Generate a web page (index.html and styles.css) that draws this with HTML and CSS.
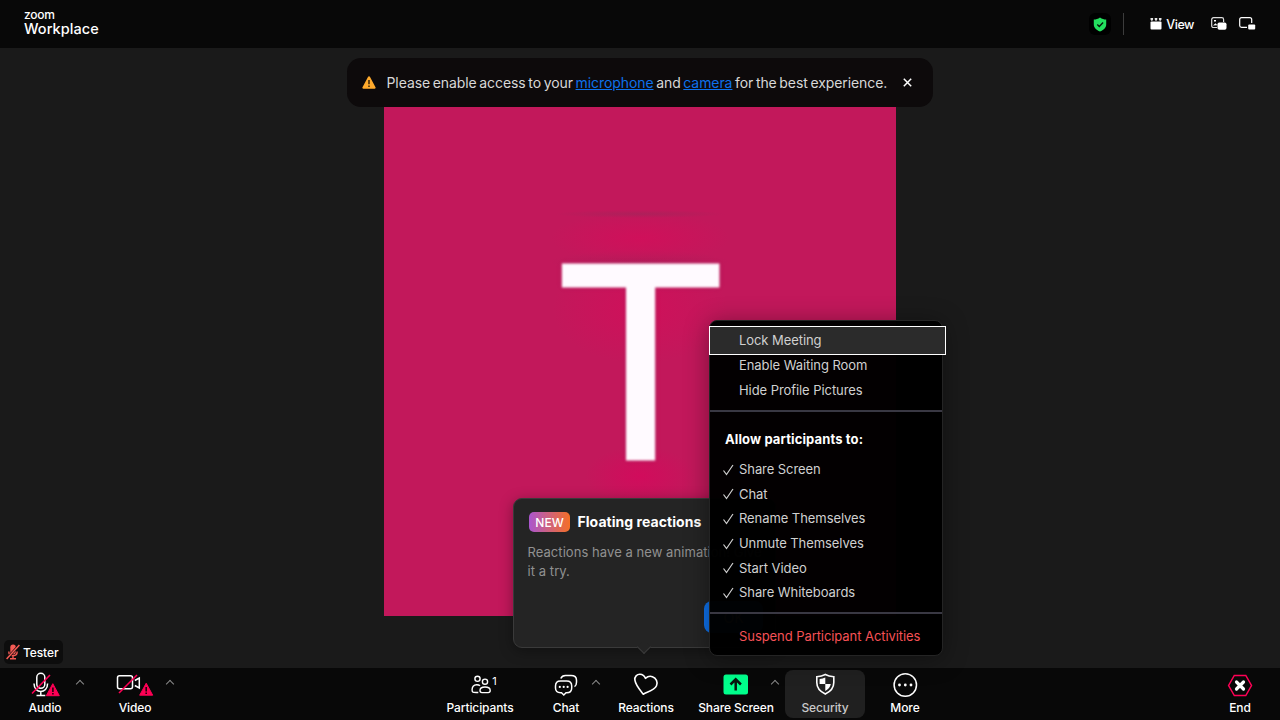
FILE: index.html
```html
<!DOCTYPE html>
<html lang="en">
<head>
<meta charset="utf-8">
<title>Zoom Workplace</title>
<link rel="stylesheet" href="styles.css">
</head>
<body>
<div class="app">
  <header class="topbar">
    <div class="brand"><span class="brand-top">zoom</span><span class="brand-name">Workplace</span></div>
    <div class="top-tools">
      <span class="shield-box"><svg width="14" height="15" viewBox="0 0 14 15"><path d="M7 0.5c2 1.4 4 2 6.2 2v5c0 3.3-2.700 5.500-6.200 7C3.500 13 .8 10.800.8 7.500v-5c2.200 0 4.200-.6 6.200-2z" fill="#23e05f"/><path d="M4.300 7.500l2 2 3.800-4" fill="none" stroke="#06150a" stroke-width="1.300"/></svg></span>
      <span class="divider"></span>
      <button class="view"><svg width="12" height="12" viewBox="0 0 12 12" fill="#fff"><path d="M.5 0h2.600v1.600l-.8 1.200H1.300L.5 1.600zM4.700 0h2.600v1.600l-.8 1.200h-1l-.8-1.200zM8.900 0h2.600v1.600l-.8 1.200h-1l-.8-1.200z" opacity=".9"/><rect x=".5" y="3.600" width="11" height="8" rx="1"/></svg><span>View</span></button>
      <svg class="pip" width="16" height="14" viewBox="0 0 16 14"><path d="M6 10.500H2.500a1.800 1.800 0 0 1-1.800-1.800V2.500A1.800 1.800 0 0 1 2.500.7h8.300a1.800 1.800 0 0 1 1.800 1.800V5" fill="none" stroke="#ddd" stroke-width="1.200"/><path d="M3 3h2v1.600H3zM2 8.500l2.500-2.300 2 2" fill="#fff"/><rect x="6.500" y="5.500" width="9" height="7.300" rx="1.800" fill="#fff"/></svg>
      <svg class="pip2" width="17" height="14" viewBox="0 0 17 14"><path d="M8 10.400H2.600A1.900 1.900 0 0 1 .7 8.500v-6A1.900 1.900 0 0 1 2.600.6h8.200a1.900 1.900 0 0 1 1.900 1.900V6" fill="none" stroke="#fff" stroke-width="1.200"/><rect x="9.200" y="7.500" width="7" height="5" rx="1" fill="#fff"/></svg>
    </div>
  </header>

  <main class="stage">
    <div class="avatar"><span class="initial">T</span></div>
    <div class="banner">
      <svg class="warn" width="14" height="13" viewBox="0 0 14 13"><path d="M6.100.8a1 1 0 0 1 1.800 0l5.600 10.500a1 1 0 0 1-.9 1.500H1.400a1 1 0 0 1-.9-1.500z" fill="#ffaa2c"/><path d="M7 4v4.200M7 9.500v1.500" stroke="#2a1a05" stroke-width="1.400"/></svg>
      <p class="banner-text"><span>Please enable access to your</span> <a>microphone</a> <span>and</span> <a>camera</a> <span>for the best experience.</span></p>
      <svg class="close" width="9" height="9" viewBox="0 0 9 9"><path d="M.8.8l7.400 7.400M8.200.8L.8 8.200" stroke="#fff" stroke-width="1.500"/></svg>
    </div>
    <div class="nametag">
      <svg width="15" height="16" viewBox="0 0 15 16"><rect x="4.300" y=".5" width="5.500" height="10" rx="2.750" fill="#f55b55"/><path d="M2.800 7.500c0 5.600 8.400 5.600 8.400 0M7 11.500v3.200M4 14.800h6" fill="none" stroke="#f55b55" stroke-width="1.400"/><path d="M.6 15L13.400 1" stroke="#0d0d0d" stroke-width="2.600"/><path d="M.6 15L13.400 1" stroke="#f55b55" stroke-width="1.500"/></svg>
      <span>Tester</span>
    </div>
    <section class="popover">
      <div class="pop-head"><span class="new">NEW</span><h2>Floating reactions</h2></div>
      <p>Reactions have a new animation! Give it a try.</p>
      <button class="ok">OK</button>
    </section>
  </main>

  <footer class="toolbar">
    <div class="tool audio">
      <svg class="ic" width="30" height="26" viewBox="0 0 30 26"><g fill="none" stroke="#fff" stroke-width="1.500"><rect x="6.800" y="1.300" width="8" height="15" rx="4"/><path d="M4 11.500c0 10.500 13.600 10.500 13.600 0M10.800 19.500v4M6.500 23.600h8.800"/></g><path d="M2 21.500L20 3" stroke="#ff0055" stroke-width="1.600"/><path d="M22.800 11.700l6.500 12H16.300z" fill="#ff0055" stroke="#ff0055"/><path d="M22.900 15.500v4.500M22.900 21.100v1.500" stroke="#24000c" stroke-width="1.600"/></svg>
      <span class="label">Audio</span><i class="caret"></i>
    </div>
    <div class="tool video">
      <svg class="ic" width="38" height="26" viewBox="0 0 38 26"><g fill="none" stroke="#fff" stroke-width="1.500"><rect x="1.500" y="3.800" width="15" height="13" rx="2"/><path d="M18.800 8.500l4.500-2.500v10L18.800 13.500"/></g><path d="M3 21L21 3" stroke="#ff0055" stroke-width="1.600"/><path d="M30.200 11.200l6.500 12H23.700z" fill="#ff0055" stroke="#ff0055"/><path d="M30.200 15v4.500M30.200 20.600v1.500" stroke="#24000c" stroke-width="1.600"/></svg>
      <span class="label">Video</span><i class="caret"></i>
    </div>
    <div class="tool participants">
      <span class="ic people"><svg width="20" height="26" viewBox="0 0 20 26" fill="none" stroke="#fff" stroke-width="1.400"><circle cx="6.500" cy="6.800" r="2.600"/><circle cx="14" cy="9.700" r="2.600"/><path d="M9 13.800c-1.500-1.500-5.200-1.600-6.800.4-1.400 2-1.500 5.200-.2 6 .7.500 3.500.3 5.300.3"/><path d="M14 15c-3 0-5 1.500-5 3.500 0 1.500.7 2.100 2 2.100h6.200c1.300 0 2-.6 2-2.100 0-2-2.200-3.500-5.200-3.500z"/></svg><b>1</b></span>
      <span class="label">Participants</span>
    </div>
    <div class="tool chat">
      <svg class="ic" width="24" height="26" viewBox="0 0 24 26"><path d="M6.800 6.500c.8-2 2.200-3 4.700-3H17c3.500 0 5.500 1.500 5.500 4.700v2c0 2.300-.5 3.600-2 4.500" fill="none" stroke="#fff" stroke-width="1.500"/><path d="M6.500 9h6.200c3.300 0 5 2 5 5v2c0 3-1.700 4.800-5 4.800H12L9.800 23l-2.300-2.200h-1c-3.300 0-5-1.800-5-4.800v-2c0-3 1.700-5 5-5z" fill="none" stroke="#fff" stroke-width="1.500"/><g fill="#fff"><circle cx="5.800" cy="14.900" r="1.100"/><circle cx="9.700" cy="14.900" r="1.100"/><circle cx="13.600" cy="14.900" r="1.100"/></g></svg>
      <span class="label">Chat</span><i class="caret"></i>
    </div>
    <div class="tool reactions">
      <svg class="ic" width="26" height="26" viewBox="0 0 26 26"><path d="M10.300 22.200C7 18 2.700 13.500 1.900 8.200 1.300 4.500 4 2.200 7 2.300c3 .1 4.500 1.800 5.400 4 2-1.700 4.500-2.500 7-1.600 3.800 1.300 5.700 5.300 4.100 9-1.800 4.300-8.500 6-13.200 8.500z" fill="none" stroke="#fff" stroke-width="1.600" stroke-linejoin="round"/></svg>
      <span class="label">Reactions</span>
    </div>
    <div class="tool share">
      <svg class="ic" width="26" height="26" viewBox="0 0 26 26"><rect x=".5" y="2.500" width="24.500" height="20" rx="2.500" fill="#00ff8c"/><path d="M12.700 18.500V7.500M7.500 12.500l5.200-5.200 5.200 5.200" fill="none" stroke="#07150e" stroke-width="2.500"/></svg>
      <span class="label">Share Screen</span><i class="caret"></i>
    </div>
    <div class="tool security active">
      <svg class="ic" width="22" height="26" viewBox="0 0 22 26"><path d="M11.300 2.500c2.600 1.400 5.300 2 8.500 2.200v5.800c0 5.500-3.200 9-8.500 11.500-5.300-2.500-8.500-6-8.500-11.500V4.700c3.200-.2 5.900-.8 8.500-2.200z" fill="none" stroke="#fff" stroke-width="1.600"/><path d="M11.300 5.500V12h5.500c-.5 3-2.400 5.200-5.500 7v-7H5.600V7c2.200-.2 4-.7 5.700-1.500z" fill="#fff"/></svg>
      <span class="label">Security</span>
    </div>
    <div class="tool more">
      <svg class="ic" width="26" height="26" viewBox="0 0 26 26"><circle cx="13.300" cy="13" r="11.200" fill="none" stroke="#fff" stroke-width="1.500"/><g fill="#fff"><circle cx="7.500" cy="13" r="1.400"/><circle cx="13.300" cy="13" r="1.400"/><circle cx="19" cy="13" r="1.400"/></g></svg>
      <span class="label">More</span>
    </div>
    <div class="tool end">
      <svg class="ic" width="26" height="26" viewBox="0 0 26 26"><path d="M7.300 3.500h11.500l5.700 10-5.700 10H7.300l-5.700-10z" fill="none" stroke="#ff0055" stroke-width="1.500"/><path d="M9.500 10l7 7M16.500 10l-7 7" stroke="#fff" stroke-width="3.200" stroke-linecap="round"/></svg>
      <span class="label">End</span>
    </div>
  </footer>

  <nav class="menu">
    <a class="item focused"><span>Lock Meeting</span></a>
    <a class="item"><span>Enable Waiting Room</span></a>
    <a class="item"><span>Hide Profile Pictures</span></a>
    <hr>
    <h3>Allow participants to:</h3>
    <a class="item"><svg class="check" width="12" height="12" viewBox="0 0 12 12"><path d="M1.500 6.500l3 4L11 1"/></svg><span>Share Screen</span></a>
    <a class="item"><svg class="check" width="12" height="12" viewBox="0 0 12 12"><path d="M1.500 6.500l3 4L11 1"/></svg><span>Chat</span></a>
    <a class="item"><svg class="check" width="12" height="12" viewBox="0 0 12 12"><path d="M1.500 6.500l3 4L11 1"/></svg><span>Rename Themselves</span></a>
    <a class="item"><svg class="check" width="12" height="12" viewBox="0 0 12 12"><path d="M1.500 6.500l3 4L11 1"/></svg><span>Unmute Themselves</span></a>
    <a class="item"><svg class="check" width="12" height="12" viewBox="0 0 12 12"><path d="M1.500 6.500l3 4L11 1"/></svg><span>Start Video</span></a>
    <a class="item"><svg class="check" width="12" height="12" viewBox="0 0 12 12"><path d="M1.500 6.500l3 4L11 1"/></svg><span>Share Whiteboards</span></a>
    <hr class="second">
    <a class="item danger"><span>Suspend Participant Activities</span></a>
  </nav>
</div>
</body>
</html>
```
FILE: styles.css
```css
* { box-sizing: border-box; }
body { margin: 0; background: #1a1a1a; font-family: Inter, "Liberation Sans", sans-serif; color: #fff; }
button { border: 0; padding: 0; background: none; color: inherit; font: inherit; }
h2, h3, p { margin: 0; }
svg { display: block; flex: none; }
.app { position: relative; width: 1280px; height: 720px; overflow: hidden; display: flex; flex-direction: column; }

.topbar { height: 48px; flex: none; background: #080808; display: flex; justify-content: space-between; padding: 0 24px; }
.brand { display: flex; flex-direction: column; padding-top: 9px; }
.brand-top { font-size: 12px; line-height: 12px; font-weight: 500; letter-spacing: -.25px; }
.brand-name { font-size: 14.500px; line-height: 15px; font-weight: 500; letter-spacing: .05px; }
.top-tools { display: flex; align-items: center; }
.shield-box { width: 22px; height: 22px; border-radius: 6px; background: #000; display: flex; align-items: center; justify-content: center; }
.divider { width: 1px; height: 22px; background: #3c3c3c; margin: 0 26px 0 12px; }
.view { display: flex; align-items: center; gap: 4px; font-size: 12.500px; font-weight: 500; letter-spacing: -.45px; }
.pip { margin-left: 17px; }
.pip2 { margin-left: 12px; }

.stage { position: relative; height: 620px; flex: none; display: flex; justify-content: center; padding-top: 56px; }
.avatar {
  width: 512px; height: 512px; display: flex; justify-content: center; align-items: flex-start;
  background:
    radial-gradient(ellipse 86px 4px at 256px 110px, rgba(165,35,90,.7), transparent) no-repeat,
    radial-gradient(ellipse 90px 26px at 256px 134px, rgba(211,14,90,.8), transparent) no-repeat,
    radial-gradient(ellipse 90px 12px at 256px 158px, rgba(170,30,88,.7), transparent) no-repeat,
    radial-gradient(ellipse 88px 55px at 256px 205px, rgba(211,14,90,.75), transparent) no-repeat,
    radial-gradient(ellipse 55px 30px at 256px 372px, rgba(211,10,92,.9), transparent) no-repeat,
    #c2185b;
}
.initial { font: 273px/230px Roboto, sans-serif; margin-top: 147px; height: 230px; color: #fffaff; filter: blur(1.200px); transform: scaleX(1.03); text-shadow: 0 0 5px #96205a; -webkit-text-stroke: 3px #fffaff; }

.banner { position: absolute; top: 10px; left: 347px; width: 586px; height: 49px; border-radius: 14px; background: #0d0a0b; display: flex; align-items: center; padding: 0 21px 0 15px; }
.banner-text { margin-left: 10.500px; flex: 1; font-size: 14px; white-space: nowrap; color: #d8d8d8; letter-spacing: -.08px; word-spacing: -1.200px; }
.banner-text a { color: #0e71eb; text-decoration: underline; }

.nametag { position: absolute; left: 4px; bottom: 4px; width: 59px; height: 24px; border-radius: 5px; background: #0d0d0d; display: flex; align-items: center; padding-left: 2px; gap: 2px; font-size: 12px; font-weight: 500; letter-spacing: -.1px; }

.popover { position: absolute; left: 513px; top: 450px; width: 263px; height: 150px; border-radius: 9px; background: #242424; border: 1px solid #3a3a3a; box-shadow: 0 3px 14px rgba(0,0,0,.35); padding: 13px 15px; display: flex; flex-direction: column; }
.popover::after { content: ""; position: absolute; left: 125px; bottom: -5px; width: 9px; height: 9px; background: #242424; border: solid #3a3a3a; border-width: 0 1px 1px 0; transform: rotate(45deg); }
.pop-head { display: flex; align-items: center; gap: 7.500px; height: 20px; }
.new { width: 41px; height: 20px; border-radius: 5px; background: linear-gradient(90deg,#aa56cf,#f56f26); font-size: 12px; line-height: 21px; text-align: center; font-weight: 500; }
.popover h2 { font-size: 14px; line-height: 18px; padding-bottom: 1px; font-weight: 700; white-space: nowrap; letter-spacing: .05px; }
.popover p { margin: 11px -10px 0 -1.500px; font-size: 13px; line-height: 19px; color: #919191; letter-spacing: .06px; }
.ok { position: absolute; left: 190px; top: 102px; width: 59px; height: 32px; border-radius: 8px; background: #0e71eb; font-size: 14px; }

.menu { position: absolute; left: 709px; top: 320px; width: 234px; height: 336px; border-radius: 8px; background: rgba(0,0,0,.985); border: 1px solid #242424; box-shadow: 0 3px 24px rgba(0,0,0,.38); padding: 8px 0; display: flex; flex-direction: column; }
.item { display: flex; align-items: center; gap: 5px; height: 24.670px; flex: none; padding-left: 12px; font-size: 13px; color: #d0d0d0; white-space: nowrap; letter-spacing: -.07px; }
.item > span { padding-bottom: 1px; }
.item > span:first-child { margin-left: 17px; }
.item.focused { height: 29px; width: 237px; margin: -3px 0 -1.500px -1px; background: #2b2b2b; border: 1px solid #fff; }
.check { fill: none; stroke: #d0d0d0; stroke-width: 1.200; }
.menu hr { width: 100%; height: 2px; flex: none; border: 0; background: #393843; margin: 7px 0 15px; }
.menu h3 { height: 24px; line-height: 24px; margin-bottom: 6.500px; padding-left: 15px; font-size: 13px; font-weight: 700; letter-spacing: .12px; }
.menu hr.second { margin: 7px 0 10px; }
.item.danger { color: #f55156; }

.toolbar { height: 52px; flex: none; background: #080808; display: flex; padding: 2px 0 0 5px; }
.tool { position: relative; width: 80px; height: 48px; flex: none; border-radius: 8px; display: flex; flex-direction: column; align-items: center; }
.ic { height: 26px; margin-top: 2px; }
.label { font-size: 12px; line-height: 16px; margin-top: 2px; font-weight: 500; white-space: nowrap; letter-spacing: -.1px; }
.caret { position: absolute; right: 2px; top: 11px; width: 6px; height: 6px; border: solid #888; border-width: 1px 0 0 1px; transform: rotate(45deg); }
.chat .caret { right: 7px; }
.share .caret { right: -2px; }
.video { margin-left: 10px; }
.participants { margin-left: 265px; }
.people { display: flex; gap: 1px; padding-left: 8px; }
.people b { font-size: 11px; line-height: 18px; font-weight: 400; }
.chat { margin-left: 6px; }
.share { margin-left: 10px; }
.security { margin-left: 9px; }
.active { background: #202020; }
.active .label { color: #c9c9c9; }
.end { margin-left: auto; }
```
